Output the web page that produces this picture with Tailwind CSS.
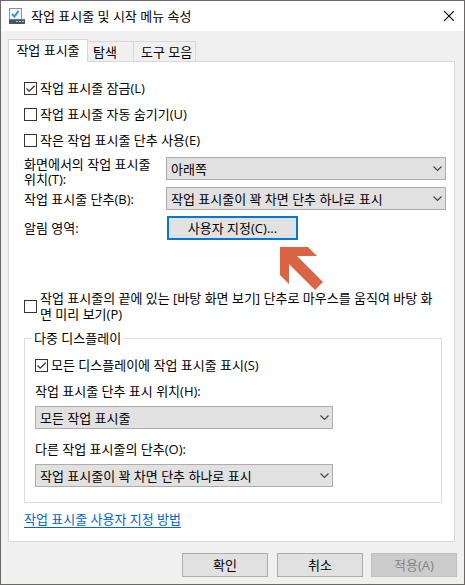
<!DOCTYPE html>
<html lang="ko">
<head>
    <meta charset="UTF-8">
    <meta name="viewport" content="width=device-width, initial-scale=1.0">
    <title>작업 표시줄 및 시작 메뉴 속성</title>
    <script src="https://cdn.jsdelivr.net/npm/@tailwindcss/browser@4"></script>
</head>
<body class="min-h-screen flex flex-col border border-[#6b6767] bg-[#f0f0f0] font-['Open_Sans','Noto_Sans_CJK_KR',sans-serif] text-[13px] leading-4 text-black">

    <!-- Title bar -->
    <header class="flex items-center h-[30px] pl-2 pr-[10px] bg-white">
        <svg class="w-4 h-4 mr-[6px]" viewBox="0 0 16 16" aria-hidden="true">
            <rect x="0.5" y="0.5" width="12" height="12" fill="#f4f7fa" stroke="#8a929c"/>
            <path d="M9 0.5h2" stroke="#d9705c"/>
            <path d="M3 6l2.500 2.500L9.500 3" fill="none" stroke="#2496d8" stroke-width="2"/>
            <rect x="0" y="11" width="16" height="5" fill="#44546f"/>
            <path d="M0 11.500h16" stroke="#66758f"/>
            <path d="M7 13.500h2M10 13.500h2M13 13.500h2" stroke="#b5c1d2" stroke-width="1"/>
        </svg>
        <h1>작업 표시줄 및 시작 메뉴 속성</h1>
        <button type="button" class="ml-auto" aria-label="닫기">
            <svg class="w-[10px] h-[10px]" viewBox="0 0 10 10" fill="none" stroke="#000" stroke-width="1.100"><path d="M0 0l10 10M10 0L0 10"/></svg>
        </button>
    </header>

    <main class="flex-1 flex flex-col px-[7px] pt-2">
        <!-- Tabs -->
        <div class="relative z-10 flex items-end -mb-px" role="tablist">
            <button type="button" role="tab" aria-selected="true" class="w-20 h-[23px] pb-[2px] border border-b-0 border-[#d9d9d9] bg-white">작업 표시줄</button>
            <button type="button" role="tab" class="w-[46px] h-[21px] pl-[5px] text-left border border-l-0 border-[#d9d9d9]">탐색</button>
            <button type="button" role="tab" class="w-[62px] h-[21px] pl-[7px] text-left border border-l-0 border-[#d9d9d9]">도구 모음</button>
        </div>

        <section class="flex-1 mr-[2px] border border-[#d9d9d9] bg-white pl-[15px] pr-2 pt-[18px] pb-3" role="tabpanel">
            <div class="flex flex-col gap-[10px]">
                <label class="flex items-center gap-[3px]">
                    <span class="relative flex">
                        <input type="checkbox" checked class="peer appearance-none w-[13px] h-[13px] border border-[#333] bg-white">
                        <svg class="hidden peer-checked:block absolute inset-0 w-[13px] h-[13px] pointer-events-none" viewBox="0 0 13 13" fill="none" stroke="#333" stroke-width="1.300"><path d="M2.500 6.500l2.700 2.700L10.700 3.700"/></svg>
                    </span>
                    작업 표시줄 잠금(L)
                </label>
                <label class="flex items-center gap-[3px]">
                    <input type="checkbox" class="appearance-none w-[13px] h-[13px] border border-[#333] bg-white">
                    작업 표시줄 자동 숨기기(U)
                </label>
                <label class="flex items-center gap-[3px]">
                    <input type="checkbox" class="appearance-none w-[13px] h-[13px] border border-[#333] bg-white">
                    작은 작업 표시줄 단추 사용(E)
                </label>
            </div>

            <div class="flex items-start mt-[9px]">
                <label for="position" class="w-[142px] leading-[15px]">화면에서의 작업 표시줄<br>위치(T):</label>
                <div class="relative flex-1">
                    <select id="position" class="block appearance-none w-full h-[23px] px-1 border border-[#adadad] bg-[#e1e1e1]">
                        <option>아래쪽</option>
                    </select>
                    <svg class="absolute right-1 top-[9px] w-[9px] h-[6px] pointer-events-none" viewBox="0 0 9 6" fill="none" stroke="#444" stroke-width="1.200"><path d="M0.500 0.500l4 4 4-4"/></svg>
                </div>
            </div>
            <div class="flex items-center">
                <label for="buttons" class="w-[142px]">작업 표시줄 단추(B):</label>
                <div class="relative flex-1">
                    <select id="buttons" class="block appearance-none w-full h-[23px] px-1 border border-[#adadad] bg-[#e1e1e1]">
                        <option>작업 표시줄이 꽉 차면 단추 하나로 표시</option>
                    </select>
                    <svg class="absolute right-1 top-[9px] w-[9px] h-[6px] pointer-events-none" viewBox="0 0 9 6" fill="none" stroke="#444" stroke-width="1.200"><path d="M0.500 0.500l4 4 4-4"/></svg>
                </div>
            </div>
            <div class="flex items-center mt-[6px]">
                <span class="w-[143px]">알림 영역:</span>
                <div class="relative">
                    <button type="button" class="block w-[131px] h-6 border-2 border-[#0078d7] bg-[#e1e1e1]">사용자 지정(C)...</button>
                    <!-- Pointer to the customize button -->
                    <svg class="absolute left-[113px] top-[31px] w-[43px] h-[43px] pointer-events-none" viewBox="0 0 43 43" fill="#da6545" aria-hidden="true"><path d="M0 0h28l9 9H17l26 26-8 8L9 17v20l-9-9z"/></svg>
                </div>
            </div>

            <label class="flex items-center gap-[3px] mt-[50px]">
                <input type="checkbox" class="appearance-none shrink-0 w-[13px] h-[13px] border border-[#333] bg-white">
                <span>작업 표시줄의 끝에 있는 [바탕 화면 보기] 단추로 마우스를 움직여 바탕 화<br>면 미리 보기(P)</span>
            </label>

            <fieldset class="mt-2 mr-1 px-[10px] pb-[15px] border border-[#dcdcdc]">
                <legend class="-ml-1 px-[3px]">다중 디스플레이</legend>
                <label class="flex items-center gap-[3px] mt-[11px]">
                    <span class="relative flex">
                        <input type="checkbox" checked class="peer appearance-none w-[13px] h-[13px] border border-[#333] bg-white">
                        <svg class="hidden peer-checked:block absolute inset-0 w-[13px] h-[13px] pointer-events-none" viewBox="0 0 13 13" fill="none" stroke="#333" stroke-width="1.300"><path d="M2.500 6.500l2.700 2.700L10.700 3.700"/></svg>
                    </span>
                    모든 디스플레이에 작업 표시줄 표시(S)
                </label>

                <label for="multi-position" class="block mt-[10px]">작업 표시줄 단추 표시 위치(H):</label>
                <div class="relative max-w-[298px] mt-[7px]">
                    <select id="multi-position" class="block appearance-none w-full h-[23px] px-1 border border-[#adadad] bg-[#e1e1e1]">
                        <option>모든 작업 표시줄</option>
                    </select>
                    <svg class="absolute right-1 top-[9px] w-[9px] h-[6px] pointer-events-none" viewBox="0 0 9 6" fill="none" stroke="#444" stroke-width="1.200"><path d="M0.500 0.500l4 4 4-4"/></svg>
                </div>

                <label for="multi-buttons" class="block mt-3">다른 작업 표시줄의 단추(O):</label>
                <div class="relative max-w-[298px] mt-[7px]">
                    <select id="multi-buttons" class="block appearance-none w-full h-[23px] px-1 border border-[#adadad] bg-[#e1e1e1]">
                        <option>작업 표시줄이 꽉 차면 단추 하나로 표시</option>
                    </select>
                    <svg class="absolute right-1 top-[9px] w-[9px] h-[6px] pointer-events-none" viewBox="0 0 9 6" fill="none" stroke="#444" stroke-width="1.200"><path d="M0.500 0.500l4 4 4-4"/></svg>
                </div>
            </fieldset>

            <a href="#" class="inline-block mt-[9px] border-b border-[#0066cc] leading-[15px] text-[#0066cc]">작업 표시줄 사용자 지정 방법</a>
        </section>
    </main>

    <!-- Dialog buttons -->
    <footer class="flex justify-end pt-[11px] pr-[7px] pb-[7px]">
        <button type="button" class="w-[86px] h-6 border border-[#adadad] bg-[#e1e1e1]">확인</button>
        <button type="button" class="w-[86px] h-6 ml-[9px] border border-[#adadad] bg-[#e1e1e1]">취소</button>
        <button type="button" disabled class="w-[86px] h-6 ml-2 border border-[#bfbfbf] bg-[#cccccc] text-[#838383]">적용(A)</button>
    </footer>

</body>
</html>
